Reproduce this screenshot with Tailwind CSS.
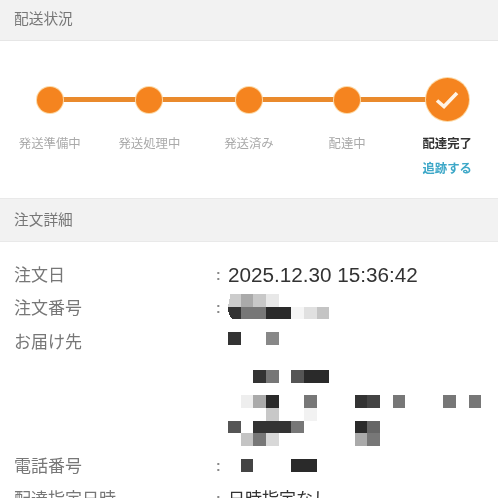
<!DOCTYPE html>
<html lang="ja">
<head>
<meta charset="utf-8">
<script src="https://cdn.jsdelivr.net/npm/@tailwindcss/browser@4"></script>
</head>
<body class="bg-white">
<div class="w-[498px] h-[498px] overflow-hidden blur-[0.4px] font-['Liberation_Sans','Noto_Sans_CJK_JP',sans-serif]">
  <div class="h-[41px] bg-[#f2f2f2] border-b border-[#e6e6e6] pl-[14px] flex items-center pb-[1px] text-[14.7px] text-[#777]">配送状況</div>

  <section class="h-[157px] relative">
    <div class="absolute left-[50px] right-[50px] top-[56px] h-[5px] bg-[#ea8a2c]"></div>
    <div class="grid grid-cols-5 text-[12.4px] text-[#aaa] text-center">
      <div class="flex flex-col items-center">
        <div class="h-[94px] flex items-center relative pt-[23px]"><div class="w-[26px] h-[26px] rounded-full bg-[#f5841f] ring-1 ring-[#fcd9a6]"></div></div>
        <div class="leading-[18px]">発送準備中</div>
      </div>
      <div class="flex flex-col items-center">
        <div class="h-[94px] flex items-center relative pt-[23px]"><div class="w-[26px] h-[26px] rounded-full bg-[#f5841f] ring-1 ring-[#fcd9a6]"></div></div>
        <div class="leading-[18px]">発送処理中</div>
      </div>
      <div class="flex flex-col items-center">
        <div class="h-[94px] flex items-center relative pt-[23px]"><div class="w-[26px] h-[26px] rounded-full bg-[#f5841f] ring-1 ring-[#fcd9a6]"></div></div>
        <div class="leading-[18px]">発送済み</div>
      </div>
      <div class="flex flex-col items-center pr-[3px]">
        <div class="h-[94px] flex items-center relative pt-[23px]"><div class="w-[26px] h-[26px] rounded-full bg-[#f5841f] ring-1 ring-[#fcd9a6]"></div></div>
        <div class="leading-[18px]">配達中</div>
      </div>
      <div class="flex flex-col items-center pr-[2px]">
        <div class="h-[94px] flex items-center relative pt-[23px]">
          <div class="w-[43px] h-[43px] rounded-full bg-[#f5841f] ring-1 ring-[#fcd9a6] flex items-center justify-center">
            <svg width="26" height="22" viewBox="0 0 26 22" fill="none"><path d="M3 11.5 L10 17.5 L23 4" stroke="#fff3e4" stroke-width="3.6"/></svg>
          </div>
        </div>
        <div class="leading-[18px] font-bold text-[#333]">配達完了</div>
        <div class="mt-[7px] leading-[18px] text-[#3ea8c8] font-bold">追跡する</div>
      </div>
    </div>
  </section>

  <div class="h-[44px] bg-[#f2f2f2] border-y border-[#e9e9e9] pl-[14px] flex items-center pt-[1px] text-[14.7px] text-[#777]">注文詳細</div>

  <section class="pt-[17px] text-[17px] text-[#777]">
    <div class="flex h-[33px] items-center">
      <div class="w-[216px] pl-[14px] pt-[1px]">注文日</div>
      <div class="w-[12px] text-[#888] text-[14px] font-bold">:</div>
      <div class="text-[20.7px] text-[#333] pb-[1px]">2025.12.30 15:36:42</div>
    </div>
    <div class="flex h-[33px] items-center">
      <div class="w-[216px] pl-[14px] pt-[1px]">注文番号</div>
      <div class="w-[12px] text-[#888] text-[14px] font-bold">:</div>
      <svg class="-mt-[3px]" width="114" height="26" viewBox="0 0 9 2.05" shape-rendering="crispEdges">
        <path d="M0.2 0H1V1H0Z" fill="#cccccc"/><rect x="1" width="1" height="1" fill="#aaaaaa"/><rect x="2" width="1" height="1" fill="#c8c8c8"/><rect x="3" width="1" height="1" fill="#e8e8e8"/>
        <path d="M0 1H1V2H0.4Q0 1.8 0 1Z" fill="#333333"/><rect x="1" y="1" width="2" height="1" fill="#777777"/><rect x="3" y="1" width="2" height="1" fill="#2a2a2a"/><rect x="5" y="1" width="1" height="1" fill="#f5f5f5"/><rect x="6" y="1" width="1" height="1" fill="#e0e0e0"/><rect x="7" y="1" width="1" height="1" fill="#c4c4c4"/>
      </svg>
    </div>
    <div class="flex h-[125px]">
      <div class="w-[216px] pl-[14px] h-[33px] leading-[35px]">お届け先</div>
      <div class="w-[12px]"></div>
      <svg class="mt-[7px]" width="266" height="115" viewBox="0 0 21 9.08" shape-rendering="crispEdges">
        <rect x="0" y="0" width="1" height="1" fill="#333333"/><rect x="3" y="0" width="1" height="1" fill="#888888"/>
        <rect x="2" y="3" width="1" height="1" fill="#333333"/><rect x="3" y="3" width="1" height="1" fill="#777777"/><rect x="5" y="3" width="1" height="1" fill="#555555"/><rect x="6" y="3" width="2" height="1" fill="#2a2a2a"/>
        <rect x="1" y="5" width="1" height="1" fill="#eeeeee"/><rect x="2" y="5" width="1" height="1" fill="#aaaaaa"/><rect x="3" y="5" width="1" height="1" fill="#2a2a2a"/><rect x="6" y="5" width="1" height="1" fill="#777777"/><rect x="10" y="5" width="1" height="1" fill="#333333"/><rect x="11" y="5" width="1" height="1" fill="#444444"/><rect x="13" y="5" width="1" height="1" fill="#777777"/><rect x="17" y="5" width="1" height="1" fill="#777777"/><rect x="19" y="5" width="1" height="1" fill="#777777"/>
        <rect x="3" y="6" width="1" height="1" fill="#c8c8c8"/><rect x="6" y="6" width="1" height="1" fill="#f2f2f2"/>
        <rect x="0" y="7" width="1" height="1" fill="#555555"/><rect x="2" y="7" width="3" height="1" fill="#333333"/><rect x="5" y="7" width="1" height="1" fill="#777777"/><rect x="10" y="7" width="1" height="1" fill="#2a2a2a"/><rect x="11" y="7" width="1" height="1" fill="#666666"/>
        <rect x="1" y="8" width="1" height="1" fill="#c4c4c4"/><rect x="2" y="8" width="1" height="1" fill="#777777"/><rect x="3" y="8" width="1" height="1" fill="#d8d8d8"/><rect x="10" y="8" width="1" height="1" fill="#aaaaaa"/><rect x="11" y="8" width="1" height="1" fill="#777777"/>
      </svg>
    </div>
    <div class="flex h-[33px] items-center">
      <div class="w-[216px] pl-[14px] pt-[1px]">電話番号</div>
      <div class="w-[12px] text-[#888] text-[14px] font-bold">:</div>
      <svg class="-mt-[2px]" width="114" height="13" viewBox="0 0 9 1.03" shape-rendering="crispEdges">
        <rect x="1" y="0" width="1" height="1" fill="#444444"/><rect x="5" y="0" width="2" height="1" fill="#2a2a2a"/>
      </svg>
    </div>
    <div class="flex h-[33px] items-center">
      <div class="w-[216px] pl-[14px] pt-[1px]">配達指定日時</div>
      <div class="w-[12px] text-[#888] text-[14px] font-bold">:</div>
      <div class="text-[17px] text-[#333]">日時指定なし</div>
    </div>
  </section>
</div>
</body>
</html>
